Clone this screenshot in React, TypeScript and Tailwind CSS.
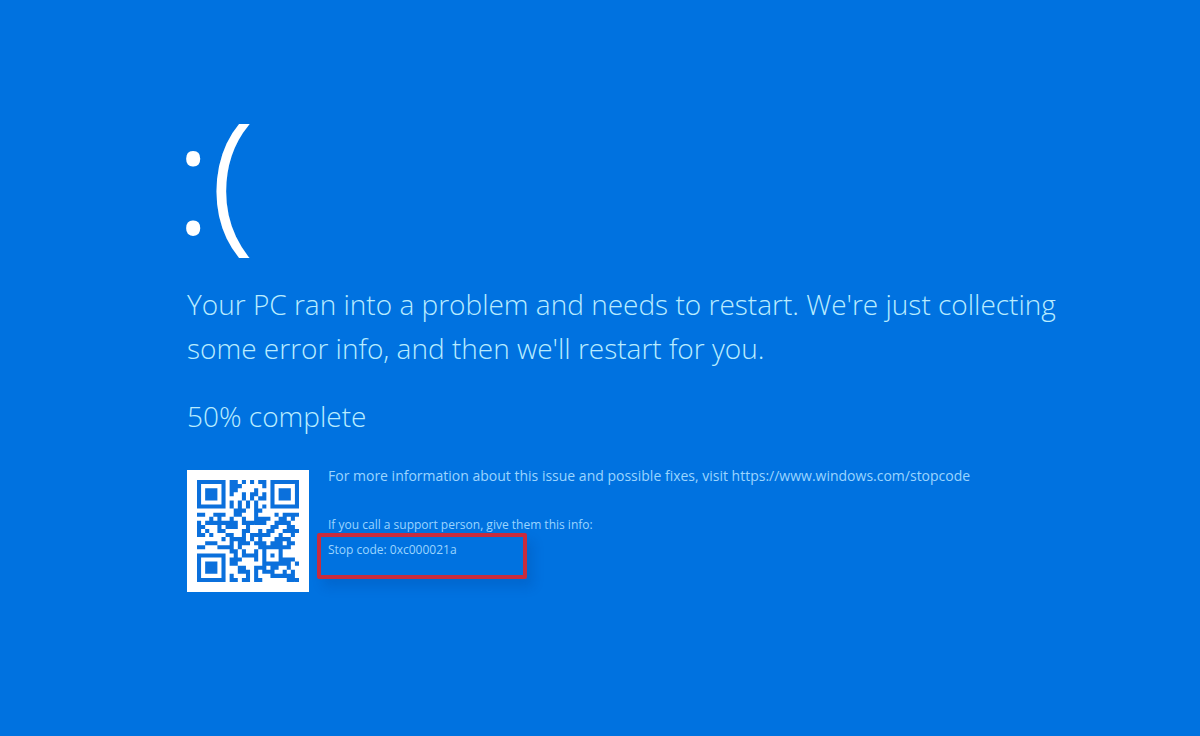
const STOP_URL = "https://www.windows.com/stopcode";

const SIZE = 25;
const DATA_WORDS = 34;
const EC_WORDS = 10;
// error level L, mask 4
const FORMAT_BITS = "110011000101111";

function gfMultiply(a: number, b: number) {
  let result = 0;
  for (let i = 7; i >= 0; i--) {
    result = (result << 1) ^ ((result >>> 7) * 0x11d);
    result ^= ((b >>> i) & 1) * a;
  }
  return result;
}

function errorWords(data: number[]) {
  const divisor: number[] = Array(EC_WORDS).fill(0);
  divisor[EC_WORDS - 1] = 1;
  let root = 1;
  for (let i = 0; i < EC_WORDS; i++) {
    for (let j = 0; j < EC_WORDS; j++) {
      divisor[j] = gfMultiply(divisor[j], root);
      if (j + 1 < EC_WORDS) divisor[j] ^= divisor[j + 1];
    }
    root = gfMultiply(root, 2);
  }

  const rest: number[] = Array(EC_WORDS).fill(0);
  for (const word of data) {
    const factor = word ^ rest.shift()!;
    rest.push(0);
    divisor.forEach((d, i) => (rest[i] ^= gfMultiply(d, factor)));
  }
  return rest;
}

// Version 2 QR code in byte mode
function buildQr(text: string) {
  const grid: (boolean | null)[][] = Array.from({ length: SIZE }, () => Array(SIZE).fill(null));

  const square = (row: number, col: number, radius: number, lightRings: number[]) => {
    for (let r = -radius; r <= radius; r++) {
      for (let c = -radius; c <= radius; c++) {
        const y = row + r;
        const x = col + c;
        if (y < 0 || x < 0 || y >= SIZE || x >= SIZE) continue;
        grid[y][x] = !lightRings.includes(Math.max(Math.abs(r), Math.abs(c)));
      }
    }
  };

  for (let i = 0; i < SIZE; i++) {
    grid[6][i] = i % 2 === 0;
    grid[i][6] = i % 2 === 0;
  }
  square(3, 3, 4, [2, 4]);
  square(3, SIZE - 4, 4, [2, 4]);
  square(SIZE - 4, 3, 4, [2, 4]);
  square(18, 18, 2, [1]);

  const format = [...FORMAT_BITS].map((b) => b === "1");
  [0, 1, 2, 3, 4, 5, 7, 8].forEach((c, i) => (grid[8][c] = format[i]));
  [7, 5, 4, 3, 2, 1, 0].forEach((r, i) => (grid[r][8] = format[8 + i]));
  for (let i = 0; i < 7; i++) grid[SIZE - 1 - i][8] = format[i];
  for (let i = 0; i < 8; i++) grid[8][SIZE - 8 + i] = format[7 + i];
  grid[SIZE - 8][8] = true;

  let bits = "0100" + text.length.toString(2).padStart(8, "0");
  for (const ch of text) bits += ch.charCodeAt(0).toString(2).padStart(8, "0");
  bits += "0000";
  const words = (bits.match(/.{8}/g) ?? []).map((b) => parseInt(b, 2));
  for (let pad = 0xec; words.length < DATA_WORDS; pad ^= 0xec ^ 0x11) words.push(pad);
  const stream = [...words, ...errorWords(words)].map((w) => w.toString(2).padStart(8, "0")).join("");

  // zigzag up and down in column pairs, skipping the timing column
  let index = 0;
  let upward = true;
  for (let right = SIZE - 1; right > 0; right -= 2) {
    if (right === 6) right = 5;
    for (let step = 0; step < SIZE; step++) {
      const r = upward ? SIZE - 1 - step : step;
      for (const c of [right, right - 1]) {
        if (grid[r][c] !== null) continue;
        const invert = (Math.floor(r / 2) + Math.floor(c / 3)) % 2 === 0;
        grid[r][c] = (stream[index++] === "1") !== invert;
      }
    }
    upward = !upward;
  }
  return grid;
}

function QrCode({ value }: { value: string }) {
  const path = buildQr(value)
    .flatMap((row, y) => row.map((dark, x) => (dark ? `M${x} ${y}h1v1h-1z` : "")))
    .join("");

  return (
    <div className="mt-1 size-[122px] shrink-0 bg-white p-[10px]">
      <svg viewBox="0 0 25 25" className="size-full" role="img" aria-label="QR code">
        <path d={path} fill="#0b70dc" />
      </svg>
    </div>
  );
}

export default function App() {
  return (
    <main className="min-h-screen bg-[#0072e0] pt-[95px] pr-[120px] pb-16 pl-[187px] font-['Open_Sans',sans-serif]">
      <h1 className="-ml-3 h-[187px] text-[152px] leading-[160px] font-light text-white [-webkit-text-stroke:2px_white]">
        :(
      </h1>

      <p className="text-[28px] leading-[44px] font-light text-[#b9ecff]">
        Your PC ran into a problem and needs to restart. We're just collecting some error info, and then we'll
        restart for you.
      </p>
      <p className="mt-6 text-[28px] leading-[44px] font-light text-[#b9ecff]">50% complete</p>

      <div className="mt-7 flex items-start gap-2">
        <QrCode value={STOP_URL} />
        <div className="text-[#9bd5ff]">
          <p className="pl-[11px] text-[14px] leading-5">
            For more information about this issue and possible fixes, visit {STOP_URL}
          </p>
          <p className="mt-[31px] pl-[11px] text-[12px] leading-4">
            If you call a support person, give them this info:
          </p>
          <div className="h-[46px] w-[210px] rounded-xs border-4 border-[#c82c3e] px-[7px] pt-[5px] text-[12px] leading-4 shadow-[6px_8px_12px_rgba(0,40,110,0.15)]">
            Stop code: 0xc000021a
          </div>
        </div>
      </div>
    </main>
  );
}
